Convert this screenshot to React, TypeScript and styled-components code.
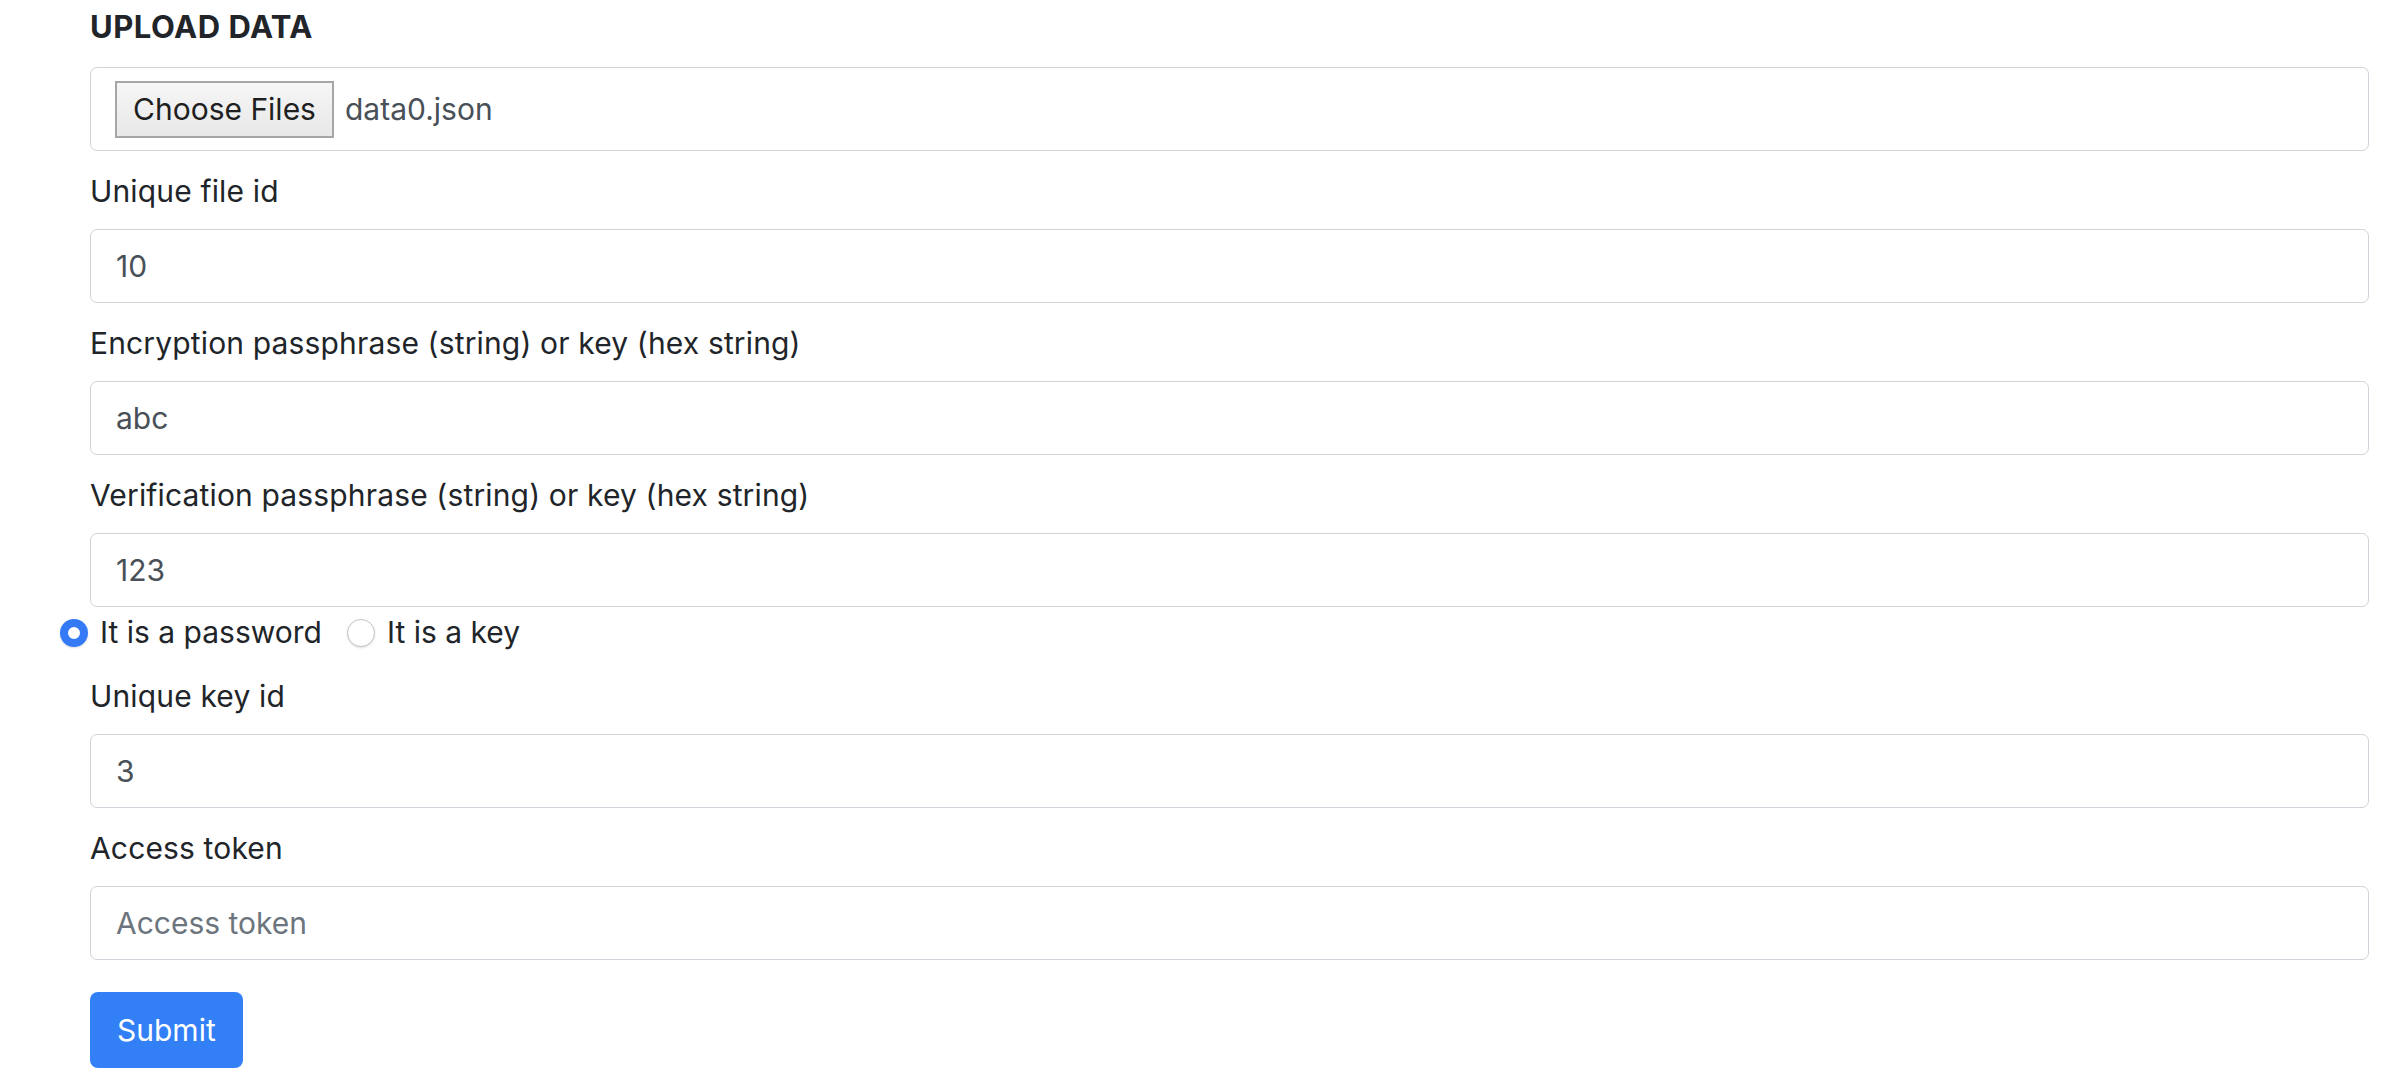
import React from "react";
import styled, { createGlobalStyle } from "styled-components";

const GlobalStyle = createGlobalStyle`
  html, body {
    margin: 0;
    padding: 0;
    background: #ffffff;
  }
  body {
    font-family: Inter, "Noto Sans", "Liberation Sans", sans-serif;
    color: #212529;
  }
  * { box-sizing: border-box; }
`;

const Page = styled.div`
  padding: 4px 23px 0 60px;
  font-size: 30px;
  line-height: 45px;
`;

const Form = styled.form`
  display: flex;
  flex-direction: column;
  align-items: stretch;
`;

const Title = styled.h5`
  margin: 0 0 18px 30px;
  font-size: 31px;
  line-height: 45px;
  font-weight: 700;
  color: #212529;
  letter-spacing: 0.5px;
`;

const FileField = styled.div`
  margin: 0 0 18px 30px;
  height: 84px;
  border: 1px solid #ced4da;
  border-radius: 7px;
  display: flex;
  align-items: center;
  padding: 0 24px;
  gap: 11px;
`;

const ChooseButton = styled.button`
  height: 57px;
  padding: 0 16px;
  font-family: inherit;
  font-size: 30px;
  color: #1f1f1f;
  background: linear-gradient(#f6f6f6, #e8e8e8);
  border: 2px solid #a6a6a6;
  border-radius: 0;
  cursor: pointer;
`;

const FileName = styled.span`
  color: #495057;
`;

const Field = styled.div<{ $mb: number }>`
  margin: 0 0 ${(p) => p.$mb}px 30px;
  display: flex;
  flex-direction: column;
`;

const Label = styled.label`
  display: block;
  line-height: 45px;
  margin-bottom: 15px;
  color: #212529;
  letter-spacing: 0.15px;
`;

const TextInput = styled.input`
  height: 74px;
  width: 100%;
  padding: 0 25px;
  font-family: inherit;
  font-size: 30px;
  color: #495057;
  background: #ffffff;
  border: 1px solid #ced4da;
  border-radius: 7px;
  outline: none;
  &::placeholder {
    color: #6c757d;
    opacity: 1;
  }
`;

const RadioRow = styled.div`
  display: flex;
  align-items: center;
  height: 45px;
  margin-bottom: 19px;
`;

const RadioOption = styled.label`
  display: inline-flex;
  align-items: center;
  gap: 12px;
  margin-right: 25px;
  color: #212529;
`;

const Radio = styled.input`
  appearance: none;
  -webkit-appearance: none;
  margin: 0;
  width: 28px;
  height: 28px;
  border-radius: 50%;
  border: 1px solid #c4c4c4;
  background: #ffffff;
  box-shadow: 0 1px 2px rgba(0, 0, 0, 0.12);
  &:checked {
    border: none;
    background: #ffffff;
    box-shadow: inset 0 0 0 8px #3479f6, 0 1px 2px rgba(0, 0, 0, 0.15);
  }
`;

const Submit = styled.button`
  align-self: flex-start;
  margin-left: 30px;
  height: 76px;
  padding: 0 27px;
  font-family: inherit;
  font-size: 30px;
  color: #ffffff;
  background: #3380f6;
  border: none;
  border-radius: 8px;
  cursor: pointer;
`;

export default function App() {
  return (
    <>
      <GlobalStyle />
      <Page>
        <Form onSubmit={(e) => e.preventDefault()}>
          <Title>UPLOAD DATA</Title>
          <FileField>
            <ChooseButton type="button">Choose Files</ChooseButton>
            <FileName>data0.json</FileName>
          </FileField>
          <Field $mb={18}>
            <Label>Unique file id</Label>
            <TextInput defaultValue="10" />
          </Field>
          <Field $mb={18}>
            <Label>Encryption passphrase (string) or key (hex string)</Label>
            <TextInput defaultValue="abc" />
          </Field>
          <Field $mb={3}>
            <Label>Verification passphrase (string) or key (hex string)</Label>
            <TextInput defaultValue="123" />
          </Field>
          <RadioRow>
            <RadioOption>
              <Radio type="radio" name="kind" defaultChecked />
              It is a password
            </RadioOption>
            <RadioOption>
              <Radio type="radio" name="kind" />
              It is a key
            </RadioOption>
          </RadioRow>
          <Field $mb={18}>
            <Label>Unique key id</Label>
            <TextInput defaultValue="3" />
          </Field>
          <Field $mb={32}>
            <Label>Access token</Label>
            <TextInput placeholder="Access token" />
          </Field>
          <Submit type="submit">Submit</Submit>
        </Form>
      </Page>
    </>
  );
}
